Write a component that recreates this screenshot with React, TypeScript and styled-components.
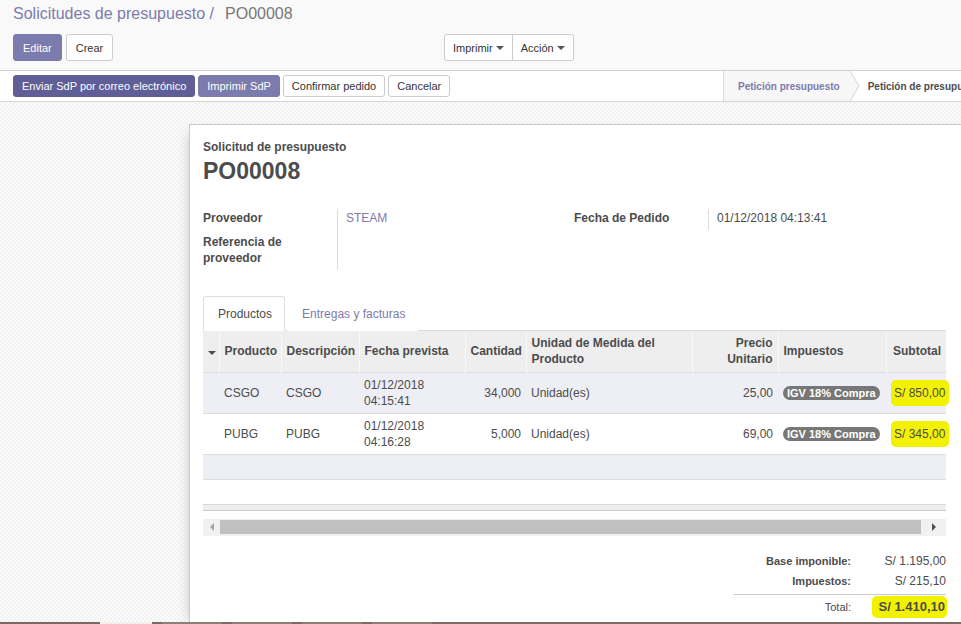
import React from "react";
import styled, { createGlobalStyle, css } from "styled-components";

const GlobalStyle = createGlobalStyle`
  html, body { margin: 0; padding: 0; }
  body {
    font-family: "Liberation Sans", Arial, sans-serif;
    font-size: 12px;
    color: #4c4c4c;
    background: #ffffff;
  }
  * { box-sizing: border-box; }
`;

const Root = styled.div`
  width: 961px;
  height: 624px;
  display: flex;
  flex-direction: column;
  overflow: hidden;
`;

const ControlPanel = styled.div`
  height: 71px;
  flex: none;
  background: #f9f9f9;
  border-bottom: 1px solid #cfcfcf;
  padding: 0 13px;
`;

const Breadcrumb = styled.div`
  height: 28px;
  line-height: 28px;
  font-size: 16px;
  white-space: nowrap;
`;

const Crumb = styled.span`
  color: #7c7bad;
`;

const ActiveCrumb = styled.span`
  color: #777777;
  margin-left: 11px;
`;

const CpRow = styled.div`
  margin-top: 6px;
  display: grid;
  grid-template-columns: 431px 1fr;
  align-items: center;
`;

const ButtonRow = styled.div`
  display: flex;
  gap: 4px;
  align-items: center;
`;

const Btn = styled.button<{ $variant?: "primary" | "dark" | "default"; $h?: number; $pad?: number }>`
  height: ${(p) => p.$h ?? 27}px;
  padding: 0 ${(p) => p.$pad ?? 8}px;
  font-family: inherit;
  font-size: 11px;
  border-radius: 3px;
  border: 1px solid #cccccc;
  background: #ffffff;
  color: #333333;
  display: inline-flex;
  align-items: center;
  white-space: nowrap;
  cursor: pointer;
  ${(p) =>
    p.$variant === "primary" &&
    css`
      background: #7c7bad;
      border-color: #7c7bad;
      color: #ffffff;
    `}
  ${(p) =>
    p.$variant === "dark" &&
    css`
      background: #5f5e97;
      border-color: #5f5e97;
      color: #ffffff;
    `}
`;

const BtnGroup = styled.div`
  display: inline-flex;
  & > ${Btn} {
    border-radius: 0;
  }
  & > ${Btn}:first-child {
    border-radius: 3px 0 0 3px;
  }
  & > ${Btn}:last-child {
    border-radius: 0 3px 3px 0;
    margin-left: -1px;
  }
`;

const Caret = styled.span<{ $color?: string }>`
  display: inline-block;
  width: 0;
  height: 0;
  margin-left: 3px;
  border-left: 4px solid transparent;
  border-right: 4px solid transparent;
  border-top: 4px solid ${(p) => p.$color ?? "#555"};
`;

const StatusBar = styled.div`
  height: 31px;
  flex: none;
  display: flex;
  align-items: stretch;
  justify-content: space-between;
  border-bottom: 1px solid #d6d6d6;
  background: #ffffff;
  padding-left: 13px;
`;

const StatusButtons = styled.div`
  display: flex;
  align-items: center;
  gap: 3px;
`;

const StatusSteps = styled.div`
  display: flex;
  align-items: stretch;
  border-left: 1px solid #dcdcdc;
  width: 238px;
  overflow: hidden;
  white-space: nowrap;
`;

const Step = styled.div<{ $current?: boolean }>`
  display: flex;
  align-items: center;
  padding: ${(p) => (p.$current ? "0 10px 0 14px" : "0 8px")};
  font-weight: bold;
  font-size: 10px;
  background: ${(p) => (p.$current ? "#f7f7f7" : "#ffffff")};
  color: ${(p) => (p.$current ? "#7c7bad" : "#4c4c4c")};
  flex: none;
`;

const Chevron = styled.svg`
  flex: none;
  display: block;
`;

const Content = styled.div`
  flex: 1;
  min-height: 0;
  overflow: hidden;
  background-color: #f7f7f7;
  background-image: repeating-conic-gradient(#f3f3f3 0 25%, #fafafa 0 50%);
  background-size: 4px 4px;
  padding: 22px 0 0 189px;
`;

const Sheet = styled.div`
  width: 800px;
  height: 100%;
  background: #ffffff;
  border: 1px solid #c9c9d6;
  border-right: none;
  border-bottom: none;
  box-shadow: -4px 4px 12px -6px rgba(0, 0, 0, 0.25);
  padding: 14px 0 0 13px;
`;

const SheetInner = styled.div`
  width: 743px;
`;

const DocType = styled.div`
  font-size: 12px;
  font-weight: bold;
  line-height: 16px;
  color: #4c4c4c;
`;

const DocName = styled.h1`
  margin: 2px 0 0;
  font-size: 23px;
  line-height: 28px;
  font-weight: bold;
  color: #4c4c4c;
`;

const Groups = styled.div`
  margin-top: 24px;
  display: grid;
  grid-template-columns: 371px 372px;
`;

const FieldGrid = styled.div`
  display: grid;
  grid-template-columns: 135px 1fr;
  align-content: start;
`;

const FieldLabel = styled.div<{ $last?: boolean }>`
  font-weight: bold;
  line-height: 16px;
  padding: 1px 8px ${(p) => (p.$last ? "4px" : "7px")} 0;
  border-right: 1px solid #dddddd;
`;

const FieldValue = styled.div<{ $link?: boolean }>`
  line-height: 16px;
  padding: 1px 0 0 8px;
  color: ${(p) => (p.$link ? "#7c7bad" : "#4c4c4c")};
`;

const Tabs = styled.div`
  margin-top: 26px;
  display: flex;
  gap: 2px;
  border-bottom: 1px solid #dddddd;
`;

const Tab = styled.div<{ $active?: boolean }>`
  height: 35px;
  line-height: 34px;
  padding: 0 12px 0 14px;
  margin-bottom: -1px;
  font-size: 12px;
  border: 1px solid ${(p) => (p.$active ? "#dddddd" : "transparent")};
  border-bottom-color: ${(p) => (p.$active ? "#ffffff" : "transparent")};
  border-radius: 3px 3px 0 0;
  background: #ffffff;
  color: ${(p) => (p.$active ? "#4c4c4c" : "#7c7bad")};
`;

const Table = styled.table`
  width: 743px;
  table-layout: fixed;
  border-collapse: collapse;
  font-size: 12px;
`;

const Th = styled.th<{ $align?: "left" | "right" | "center" }>`
  background: #eeeeee;
  font-weight: bold;
  line-height: 16px;
  padding: 4px 5px;
  height: 41px;
  text-align: ${(p) => p.$align ?? "left"};
  border-left: 1px solid #f8f8f8;
  vertical-align: middle;
  &:first-child {
    border-left: none;
  }
`;

const Tr = styled.tr<{ $odd?: boolean }>`
  background: ${(p) => (p.$odd ? "#eeeef5" : "#ffffff")};
`;

const Td = styled.td<{ $align?: "left" | "right" }>`
  line-height: 16px;
  padding: 4px 5px;
  text-align: ${(p) => p.$align ?? "left"};
  border-top: 1px solid #dddddd;
  vertical-align: middle;
  white-space: nowrap;
  overflow: visible;
`;

const EmptyTd = styled.td`
  height: 25px;
  border-top: 1px solid #dddddd;
`;

const FootTd = styled.td`
  height: 6px;
  padding: 0;
  background: #eeeeee;
  border-top: 1px solid #d8d8d8;
  border-bottom: 1px solid #c8c8c8;
`;

const Badge = styled.span`
  display: inline-block;
  background: #777777;
  color: #ffffff;
  font-weight: bold;
  font-size: 11px;
  line-height: 14px;
  padding: 0 4px;
  border-radius: 8px;
`;

const Marker = styled.span<{ $big?: boolean }>`
  display: inline-block;
  background: #f2f200;
  border-radius: 5px;
  padding: ${(p) => (p.$big ? "3px 2px 3px 7px" : "5px 4px 5px 3px")};
  margin-right: ${(p) => (p.$big ? "-1px" : "-5px")};
  line-height: 16px;
`;

const SortCaret = styled(Caret)`
  margin-left: 0;
  border-top-color: #4c4c4c;
`;

const ScrollBar = styled.div`
  margin-top: 8px;
  height: 17px;
  width: 743px;
  background: #f1f1f1;
  display: grid;
  grid-template-columns: 17px 1fr 25px;
  align-items: center;
`;

const ScrollThumb = styled.div`
  height: 14px;
  background: #c1c1c1;
`;

const ArrowBox = styled.div`
  display: flex;
  justify-content: center;
  align-items: center;
`;

const Arrow = styled.span<{ $dir: "left" | "right"; $dim?: boolean }>`
  width: 0;
  height: 0;
  border-top: 4px solid transparent;
  border-bottom: 4px solid transparent;
  ${(p) =>
    p.$dir === "left"
      ? css`border-right: 4px solid ${p.$dim ? "#a3a3a3" : "#505050"};`
      : css`border-left: 4px solid ${p.$dim ? "#a3a3a3" : "#505050"};`}
`;

const Totals = styled.div`
  margin: 15px 0 0 auto;
  width: 213px;
  display: grid;
  grid-template-columns: 118px 88px;
  column-gap: 7px;
`;

const TotLabel = styled.div<{ $plain?: boolean }>`
  text-align: right;
  font-size: 11px;
  font-weight: ${(p) => (p.$plain ? "normal" : "bold")};
  line-height: 20px;
`;

const TotValue = styled.div`
  text-align: right;
  font-size: 12px;
  line-height: 20px;
`;

const TotDivider = styled.div`
  grid-column: 1 / -1;
  border-top: 1px solid #cccccc;
  margin: 3px 0 1px;
`;

const TotalLabel = styled(TotLabel)`
  line-height: 22px;
`;

const TotalValue = styled.div`
  text-align: right;
  font-size: 13px;
  font-weight: bold;
  line-height: 16px;
`;

const TaskStrip = styled.div`
  height: 2px;
  flex: none;
  background: #7b6b62;
  display: flex;
  padding-left: 100px;
  gap: 10px;
`;

const TaskItem = styled.div<{ $w: number; $light?: boolean }>`
  width: ${(p) => p.$w}px;
  height: 2px;
  background: ${(p) => (p.$light ? "#f3f0ec" : "#8e7f76")};
`;

type Line = {
  product: string;
  date: string;
  time: string;
  qty: string;
  price: string;
  subtotal: string;
};

const lines: Line[] = [
  { product: "CSGO", date: "01/12/2018", time: "04:15:41", qty: "34,000", price: "25,00", subtotal: "S/ 850,00" },
  { product: "PUBG", date: "01/12/2018", time: "04:16:28", qty: "5,000", price: "69,00", subtotal: "S/ 345,00" },
];

export default function App() {
  return (
    <Root>
      <GlobalStyle />
      <ControlPanel>
        <Breadcrumb>
          <Crumb>Solicitudes de presupuesto /</Crumb>
          <ActiveCrumb>PO00008</ActiveCrumb>
        </Breadcrumb>
        <CpRow>
          <ButtonRow>
            <Btn $variant="primary" $pad={9}>Editar</Btn>
            <Btn $pad={9}>Crear</Btn>
          </ButtonRow>
          <div>
            <BtnGroup>
              <Btn>
                Imprimir <Caret />
              </Btn>
              <Btn>
                Acción <Caret />
              </Btn>
            </BtnGroup>
          </div>
        </CpRow>
      </ControlPanel>

      <StatusBar>
        <StatusButtons>
          <Btn $variant="dark" $h={22}>Enviar SdP por correo electrónico</Btn>
          <Btn $variant="primary" $h={22}>Imprimir SdP</Btn>
          <Btn $h={22}>Confirmar pedido</Btn>
          <Btn $h={22}>Cancelar</Btn>
        </StatusButtons>
        <StatusSteps>
          <Step $current>Petición presupuesto</Step>
          <Chevron width="10" height="30" viewBox="0 0 10 30">
            <polygon points="0,0 0,30 9,15" fill="#f7f7f7" />
            <polyline points="0,0 9,15 0,30" fill="none" stroke="#d4d4d4" strokeWidth="1" />
          </Chevron>
          <Step>Petición de presupuesto enviada</Step>
        </StatusSteps>
      </StatusBar>

      <Content>
        <Sheet>
          <SheetInner>
            <DocType>Solicitud de presupuesto</DocType>
            <DocName>PO00008</DocName>

            <Groups>
              <FieldGrid>
                <FieldLabel>Proveedor</FieldLabel>
                <FieldValue $link>STEAM</FieldValue>
                <FieldLabel $last>
                  Referencia de
                  <br />
                  proveedor
                </FieldLabel>
                <FieldValue />
              </FieldGrid>
              <FieldGrid>
                <FieldLabel $last>Fecha de Pedido</FieldLabel>
                <FieldValue>01/12/2018 04:13:41</FieldValue>
              </FieldGrid>
            </Groups>

            <Tabs>
              <Tab $active>Productos</Tab>
              <Tab>Entregas y facturas</Tab>
            </Tabs>

            <Table>
              <colgroup>
                <col style={{ width: 16 }} />
                <col style={{ width: 62 }} />
                <col style={{ width: 78 }} />
                <col style={{ width: 106 }} />
                <col style={{ width: 61 }} />
                <col style={{ width: 166 }} />
                <col style={{ width: 86 }} />
                <col style={{ width: 108 }} />
                <col style={{ width: 60 }} />
              </colgroup>
              <thead>
                <tr>
                  <Th $align="center">
                    <SortCaret />
                  </Th>
                  <Th>Producto</Th>
                  <Th>Descripción</Th>
                  <Th>Fecha prevista</Th>
                  <Th $align="right">Cantidad</Th>
                  <Th>Unidad de Medida del Producto</Th>
                  <Th $align="right">Precio Unitario</Th>
                  <Th>Impuestos</Th>
                  <Th $align="right">Subtotal</Th>
                </tr>
              </thead>
              <tbody>
                {lines.map((l, i) => (
                  <Tr key={l.product} $odd={i % 2 === 0}>
                    <Td />
                    <Td>{l.product}</Td>
                    <Td>{l.product}</Td>
                    <Td>
                      {l.date}
                      <br />
                      {l.time}
                    </Td>
                    <Td $align="right">{l.qty}</Td>
                    <Td>Unidad(es)</Td>
                    <Td $align="right">{l.price}</Td>
                    <Td>
                      <Badge>IGV 18% Compra</Badge>
                    </Td>
                    <Td $align="right">
                      <Marker>{l.subtotal}</Marker>
                    </Td>
                  </Tr>
                ))}
                <Tr $odd>
                  <EmptyTd colSpan={9} />
                </Tr>
                <Tr>
                  <EmptyTd colSpan={9} />
                </Tr>
              </tbody>
              <tfoot>
                <tr>
                  <FootTd colSpan={9} />
                </tr>
              </tfoot>
            </Table>

            <ScrollBar>
              <ArrowBox>
                <Arrow $dir="left" $dim />
              </ArrowBox>
              <ScrollThumb />
              <ArrowBox>
                <Arrow $dir="right" />
              </ArrowBox>
            </ScrollBar>

            <Totals>
              <TotLabel>Base imponible:</TotLabel>
              <TotValue>S/ 1.195,00</TotValue>
              <TotLabel>Impuestos:</TotLabel>
              <TotValue>S/ 215,10</TotValue>
              <TotDivider />
              <TotalLabel $plain>Total:</TotalLabel>
              <TotalValue>
                <Marker $big>S/ 1.410,10</Marker>
              </TotalValue>
            </Totals>
          </SheetInner>
        </Sheet>
      </Content>
      <TaskStrip>
        <TaskItem $w={52} $light />
        <TaskItem $w={60} />
        <TaskItem $w={60} />
        <TaskItem $w={60} />
        <TaskItem $w={60} />
      </TaskStrip>
    </Root>
  );
}
